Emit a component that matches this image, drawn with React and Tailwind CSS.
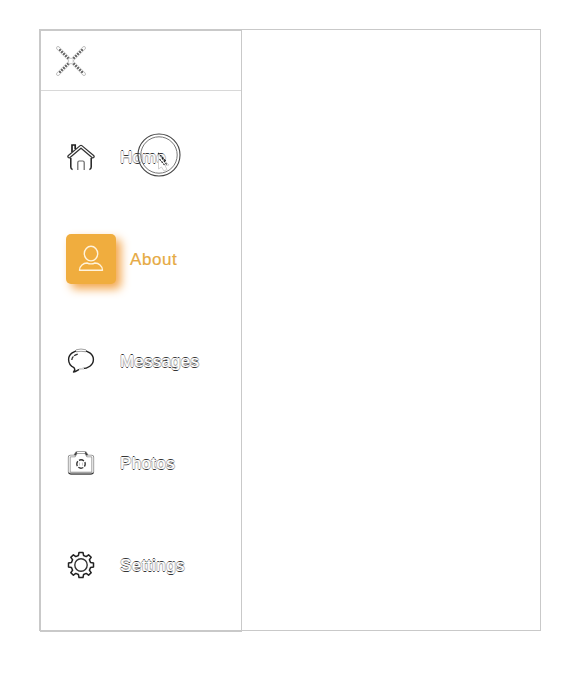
import React from "react";

// Double-edged line: dark casing with a light core
function Outline({ d, w = 3, core = 1.2, color = "#444" }) {
  return (
    <g fill="none" strokeLinecap="round" strokeLinejoin="round">
      <path d={d} stroke={color} strokeWidth={w} />
      <path d={d} stroke="#fff" strokeWidth={core} />
    </g>
  );
}

function CloseIcon() {
  const d = "M2 2 L28 28 M28 2 L2 28";
  return (
    <svg width="30" height="30" viewBox="0 0 30 30" fill="none" strokeLinecap="round">
      <path d={d} stroke="#b8b8b8" strokeWidth="3.6" />
      <path d={d} stroke="#fff" strokeWidth="2" />
      <path
        d="M3 3 L12.5 12.5 M27 3 L17.5 12.5 M3 27 L12.5 17.5 M27 27 L17.5 17.5"
        stroke="#000"
        strokeWidth="1.6"
        strokeLinecap="butt"
        strokeDasharray="1.4 1.43"
        strokeDashoffset="-0.7"
      />
      <path d="M13 12.5 H17 V17.5 H13Z" fill="#fff" stroke="#ccc" strokeWidth="0.7" />
    </svg>
  );
}

function HomeIcon() {
  return (
    <svg width="28" height="28" viewBox="0 0 28 28" fill="none" stroke="#222" strokeWidth="1.4">
      <path d="M5 9 V2 H8.2 V6" strokeWidth="1.7" />
      <Outline d="M2.2 13.5 L14 3.6 L25.8 13.5" w={3.8} core={1.3} color="#333" />
      <path d="M3.8 15 V24 Q3.8 26.2 5.6 26.6 M24.2 15 V24 Q24.2 26.2 22.4 26.6" strokeWidth="1.5" />
      <path d="M10.8 27 V19.5 Q10.8 18 12.2 18 H15.8 Q17.2 18 17.2 19.5 V27" stroke="#666" strokeWidth="1.2" />
    </svg>
  );
}

function PersonIcon() {
  return (
    <svg width="28" height="28" viewBox="0 0 28 28" fill="none" stroke="#fff3dc" strokeWidth="1.4" strokeLinejoin="round">
      <ellipse cx="14" cy="8.6" rx="6.7" ry="7.3" />
      <path d="M2.5 25.3 C2.5 20.5 6.5 18.2 10 18 Q14 19.8 18 18 C21.5 18.2 25.5 20.5 25.5 25.3 Z" />
    </svg>
  );
}

function MessageIcon() {
  return (
    <svg width="28" height="28" viewBox="0 0 28 28" fill="none" stroke="#222" strokeWidth="1.4" strokeLinejoin="round">
      <path d="M7 20.6 C3 18.8 1.6 16 1.6 12.5 C1.6 7 7 3.3 14 3.3 S26.4 7 26.4 12.5 S21 21.8 14.4 21.6 C12 21.6 9.5 25 6.5 25 Q8.8 23 7 20.6Z" />
      <path d="M4.8 13 Q5 8.5 11.5 6.8" stroke="#333" strokeWidth="1.3" strokeDasharray="4 1" />
      <path d="M9 3.6 Q14 2.6 19 3.6" stroke="#fff" strokeWidth="2" />
      <path d="M9 2.8 Q14 1.2 19 2.8 M9 4.8 Q14 3.8 19 4.8" stroke="#999" strokeWidth="0.9" />
      <path d="M12 21.9 H17" stroke="#fff" strokeWidth="1.8" />
      <path d="M12 21.9 H17" stroke="#aaa" strokeWidth="0.9" />
    </svg>
  );
}

function CameraIcon() {
  return (
    <svg width="28" height="28" viewBox="0 0 28 28">
      <Outline d="M3.6 7 H7.4 L9.7 3.5 H18.3 L20.6 7 H24.4 Q25.8 7 25.8 8.5 V22.8 Q25.8 24.2 24.4 24.2 H3.6 Q2.2 24.2 2.2 22.8 V8.5 Q2.2 7 3.6 7Z" w={2.7} core={1.1} color="#888" />
      <path d="M1.8 23.6 Q2.4 25 4 25 H24 Q25.6 25 26.2 23.6 M7.6 6.3 L9.8 3.3 M20.4 6.3 L18.2 3.3" fill="none" stroke="#222" strokeWidth="1.1" />
      <circle cx="14" cy="15" r="4.2" fill="none" stroke="#333" strokeWidth="1.4" strokeDasharray="5.2 1.4" strokeDashoffset="2.6" />
      <path d="M12.5 13.6 v3 M15.5 13.6 v3" stroke="#bbb" strokeWidth="0.8" />
    </svg>
  );
}

function GearIcon() {
  const d =
    "M12 1.5 H16 L16.6 4.5 L19.2 5.6 L21.6 3.8 L24.2 6.4 L22.4 8.8 L23.5 11.4 L26.5 12 V16 L23.5 16.6 L22.4 19.2 L24.2 21.6 L21.6 24.2 L19.2 22.4 L16.6 23.5 L16 26.5 H12 L11.4 23.5 L8.8 22.4 L6.4 24.2 L3.8 21.6 L5.6 19.2 L4.5 16.6 L1.5 16 V12 L4.5 11.4 L5.6 8.8 L3.8 6.4 L6.4 3.8 L8.8 5.6 L11.4 4.5Z";
  return (
    <svg width="28" height="28" viewBox="0 0 28 28" fill="none" stroke="#222" strokeLinejoin="round">
      <path d={d} strokeWidth="1.5" />
      <circle cx="14" cy="14" r="6.2" strokeWidth="1.4" stroke="#333" />
    </svg>
  );
}

function Pointer() {
  return (
    <svg className="absolute left-[15px] -top-[13px]" width="46" height="46" viewBox="0 0 46 46" fill="none">
      <circle cx="24" cy="24" r="21" stroke="#444" strokeWidth="1.1" />
      <circle cx="24" cy="24" r="18.2" stroke="#777" strokeWidth="1" />
      <path d="M23.5 24 V38 L26.5 36 L29 40 L32 38.5 L30 34.5 L34 34Z" fill="#fff" stroke="#ccc" strokeWidth="0.9" />
      <path d="M23 22 L31 30 M24.5 28 L29.5 34 M27 27 L32 34" stroke="#222" strokeWidth="1.1" strokeDasharray="2 1" />
    </svg>
  );
}

const items = [
  { label: "Home", Icon: HomeIcon, tracking: "tracking-[0.1px]" },
  { label: "About", Icon: PersonIcon, active: true },
  { label: "Messages", Icon: MessageIcon, tracking: "tracking-[0.2px]" },
  { label: "Photos", Icon: CameraIcon, tracking: "tracking-[0.35px]" },
  { label: "Settings", Icon: GearIcon, tracking: "tracking-[0.45px]" },
];

function Item({ label, Icon, active, tracking }) {
  if (active) {
    return (
      <li className="flex h-[102px] items-center pl-[25px]">
        <span className="flex size-[50px] items-center justify-center rounded-[5px] bg-[#f0ad3e] shadow-[5px_5px_10px_#f4a850]">
          <Icon />
        </span>
        <span className="ml-3.5 pt-0.5 text-[17px] leading-6 tracking-[0.55px] text-[#e6a942] opacity-99 [-webkit-text-stroke:0.2px_#e6a942]">
          {label}
        </span>
      </li>
    );
  }
  return (
    <li className="flex h-[102px] items-center pl-[26px]">
      <Icon />
      <span className="relative ml-[25px] pt-0.5 text-[17px] leading-6">
        <span
          className={`text-white opacity-99 [text-shadow:-1px_0_#bbb,1px_0_#bbb,0_-1px_#333,0_1px_#333] ${tracking}`}
        >
          {label}
        </span>
        {label === "Home" && <Pointer />}
      </span>
    </li>
  );
}

export default function App() {
  return (
    <main className="h-[683px] w-[571px] bg-white pl-[39px] pt-[29px] font-['Liberation_Sans',Arial,sans-serif]">
      <div className="h-[602px] w-[502px] border border-[#c9c9c9]">
        <nav className="h-[602px] w-[202px] border border-[#c9c9c9]">
          <header className="flex h-[60px] items-center border-b border-[#d8d8d8] pl-[15px]">
            <CloseIcon />
          </header>
          <ul className="pt-[15px]">
            {items.map((item) => (
              <Item key={item.label} {...item} />
            ))}
          </ul>
        </nav>
      </div>
    </main>
  );
}
